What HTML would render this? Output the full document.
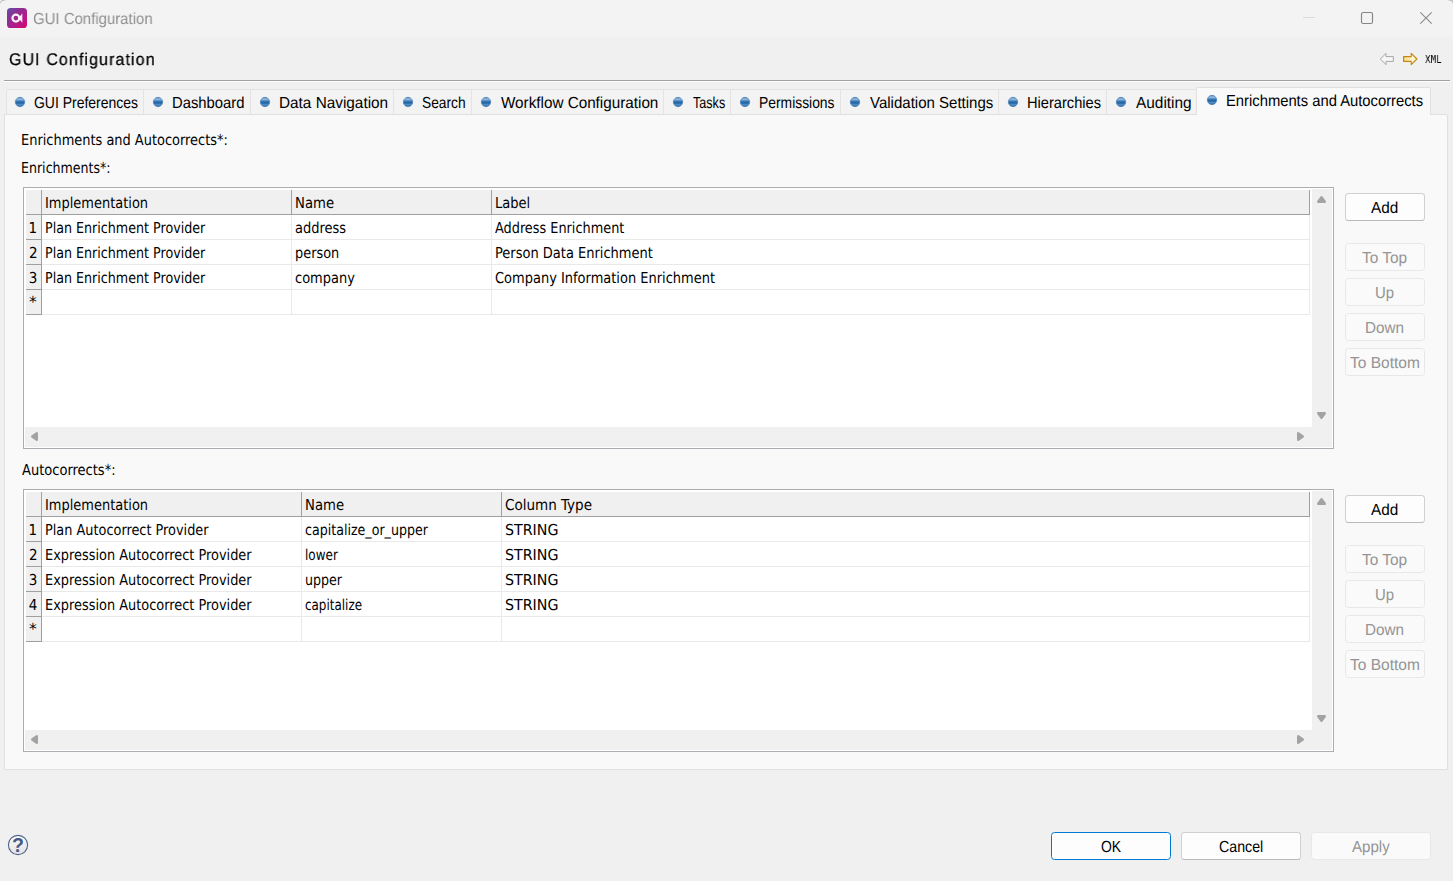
<!DOCTYPE html>
<html lang="en">
<head>
<meta charset="utf-8">
<title>GUI Configuration</title>
<style>
html,body{margin:0;padding:0;}
body{width:1453px;height:881px;overflow:hidden;background:#f0f0f0;position:relative;font-family:"Liberation Sans",sans-serif;color:#000;}
header,nav,main,section,footer{display:block;margin:0;padding:0;}
h1,h2{margin:0;font-weight:normal;}
div,svg,button,.t{position:absolute;box-sizing:border-box;margin:0;padding:0;}
.t{white-space:nowrap;display:block;text-rendering:geometricPrecision;transform-origin:0 0;}
.sg{font-family:"Liberation Sans",sans-serif;font-size:16px;line-height:19px;}
.tf{font-family:"DejaVu Sans Condensed","Liberation Sans",sans-serif;font-size:15px;line-height:18px;}
.mono{font-family:"Liberation Mono",monospace;font-size:12px;line-height:14px;}
.hd{font-size:17px;line-height:20px;-webkit-text-stroke:0.27px #000;}
.gs{will-change:transform;}
.titlebar{left:0;top:0;width:1453px;height:37px;background:#f3f3f3;}
.rule{left:4px;top:80px;width:1446px;height:2px;background:#fff;border-top:1px solid #a0a0a0;}
.tab{top:89px;height:25px;background:#f3f3f3;border:1px solid #e3e3e3;border-bottom:none;}
.tab.first{border-top-left-radius:2px;}
.tab.active{top:87px;height:28px;background:#f9f9f9;border-color:#e0e0e0;border-radius:2px 2px 0 0;}
.panel{left:4px;top:114px;width:1444px;height:656px;background:#f9f9f9;border:1px solid #e0e0e0;border-top-right-radius:2px;}
.grid{left:23px;width:1311px;background:#fff;border:1px solid #abadb3;}
.sb{background:#f0f0f0;}
.c{height:25px;border-right:1px solid #e9e9e9;border-bottom:1px solid #e9e9e9;background:#fff;}
.c.h,.c.n{background:#f0f0f0;border-color:#a0a0a0;}
button{font:inherit;color:inherit;border:1px solid #d0d0d0;border-bottom-color:#bababa;border-radius:3.5px;background:#fdfdfd;width:80px;height:28px;overflow:visible;}
button:disabled{border-color:#e8e8e8;background:#fafafa;color:#949494;}
button.def{border-color:#0078d4;}
button.wide{width:120px;}
</style>
</head>
<body>

<header>
<div class="titlebar">
<svg style="left:7px;top:8px" width="20" height="20" viewBox="0 0 20 20">
<defs><linearGradient id="ig" x1="0" y1="0" x2="1" y2="1"><stop offset="0" stop-color="#6350a8"/><stop offset="0.3" stop-color="#873296"/><stop offset="0.65" stop-color="#b31a88"/><stop offset="1" stop-color="#d8046c"/></linearGradient></defs>
<rect x="0" y="0" width="20" height="20" rx="3.6" fill="url(#ig)"/>
<circle cx="8.9" cy="10.1" r="3.45" fill="none" stroke="#fdf2f9" stroke-width="2.2"/>
<path d="M11.4 10.1L15.3 5.4V14.8Z" fill="#fdf2f9"/>
</svg>
<svg style="left:0;top:0" width="8" height="5" viewBox="0 0 8 5" shape-rendering="crispEdges">
<rect x="0" y="3" width="1" height="1" fill="#e4e4e4"/><rect x="0" y="2" width="1" height="1" fill="#cfcfcf"/><rect x="1" y="1" width="1" height="1" fill="#b4b4b4"/><rect x="0" y="1" width="1" height="1" fill="#dedede"/><rect x="1" y="0" width="1" height="1" fill="#dcdcdc"/>
<rect x="2" y="0" width="1" height="1" fill="#bcbcbc"/><rect x="3" y="0" width="1" height="1" fill="#c6c6c6"/><rect x="4" y="0" width="1" height="1" fill="#d2d2d2"/><rect x="5" y="0" width="1" height="1" fill="#e2e2e2"/>
</svg>
<svg style="left:1445px;top:0" width="8" height="5" viewBox="0 0 8 5" shape-rendering="crispEdges">
<rect x="7" y="3" width="1" height="1" fill="#e8e8e8"/><rect x="7" y="2" width="1" height="1" fill="#d6d6d6"/><rect x="7" y="1" width="1" height="1" fill="#b0b0b0"/><rect x="6" y="1" width="1" height="1" fill="#e0e0e0"/><rect x="7" y="0" width="1" height="1" fill="#d8d8d8"/>
<rect x="6" y="0" width="1" height="1" fill="#bcbcbc"/><rect x="5" y="0" width="1" height="1" fill="#c4c4c4"/><rect x="4" y="0" width="1" height="1" fill="#d0d0d0"/><rect x="3" y="0" width="1" height="1" fill="#e2e2e2"/>
</svg>
<span class="t sg gs" style="left:33.35px;top:10px;transform:scaleX(0.9339);color:#8f8f8f;">GUI Configuration</span>
<svg style="left:1293px;top:0" width="160" height="37" viewBox="0 0 160 37" fill="none">
<path d="M10 17.5H22" stroke="#dadada" stroke-width="1"/>
<rect x="68.5" y="12.5" width="11" height="11" rx="1.8" stroke="#858585" stroke-width="1.15"/>
<path d="M127.3 12.3L138.7 23.7M138.7 12.3L127.3 23.7" stroke="#8a8a8a" stroke-width="1.1"/>
</svg>
</div>
<h1 class="t sg hd gs" style="left:9.30px;top:50px;letter-spacing:1.178px;transform:scaleX(0.9400);">GUI Configuration</h1>
<svg style="left:1378px;top:50px" width="42" height="18" viewBox="0 0 42 18">
<defs><linearGradient id="ag" x1="0" y1="0" x2="1" y2="0"><stop offset="0" stop-color="#f9dc7c"/><stop offset="0.7" stop-color="#fff6d6"/><stop offset="1" stop-color="#fbe9a8"/></linearGradient></defs>
<path d="M2.3 9.0L8.0 3.4V6.6H15.3V11.4H8.0V14.6Z" fill="#f6f6f6" stroke="#a6a6a6" stroke-width="1" stroke-linejoin="round"/>
<path d="M38.9 9.0L33.2 3.4V6.6H25.6V11.4H33.2V14.6Z" fill="url(#ag)" stroke="#bf8618" stroke-width="1.1" stroke-linejoin="round"/>
</svg>
<span class="t mono gs" style="left:1424.61px;top:53px;transform:scaleX(0.7726);">XML</span>
<div class="rule"></div>
</header>
<svg width="0" height="0" style="left:0;top:0"><defs>
<linearGradient id="dg" x1="0" y1="0" x2="0" y2="1"><stop offset="0" stop-color="#4f8ac2"/><stop offset="0.2" stop-color="#9cbde0"/><stop offset="0.42" stop-color="#3b79b6"/><stop offset="0.6" stop-color="#1c62a4"/><stop offset="0.8" stop-color="#5c90c5"/><stop offset="1" stop-color="#1f629f"/></linearGradient>
</defs></svg>
<nav>
<div class="panel"></div>
<div class="tab first" style="left:6px;width:138px;"><svg style="left:7px;top:6px" width="12" height="12" viewBox="0 0 12 12"><circle cx="6" cy="6" r="4.7" fill="url(#dg)" stroke="#2e6dab" stroke-opacity="0.75" stroke-width="0.7"/></svg><span class="t sg" style="left:27.20px;top:4px;transform:scaleX(0.8730);">GUI Preferences</span></div>
<div class="tab" style="left:143px;width:108px;"><svg style="left:8px;top:6px" width="12" height="12" viewBox="0 0 12 12"><circle cx="6" cy="6" r="4.7" fill="url(#dg)" stroke="#2e6dab" stroke-opacity="0.75" stroke-width="0.7"/></svg><span class="t sg" style="left:28.32px;top:4px;transform:scaleX(0.9247);">Dashboard</span></div>
<div class="tab" style="left:250px;width:144px;"><svg style="left:8px;top:6px" width="12" height="12" viewBox="0 0 12 12"><circle cx="6" cy="6" r="4.7" fill="url(#dg)" stroke="#2e6dab" stroke-opacity="0.75" stroke-width="0.7"/></svg><span class="t sg" style="left:27.87px;top:4px;transform:scaleX(0.9586);">Data Navigation</span></div>
<div class="tab" style="left:393px;width:79px;"><svg style="left:8px;top:6px" width="12" height="12" viewBox="0 0 12 12"><circle cx="6" cy="6" r="4.7" fill="url(#dg)" stroke="#2e6dab" stroke-opacity="0.75" stroke-width="0.7"/></svg><span class="t sg" style="left:28.38px;top:4px;transform:scaleX(0.8599);">Search</span></div>
<div class="tab" style="left:471px;width:193px;"><svg style="left:8px;top:6px" width="12" height="12" viewBox="0 0 12 12"><circle cx="6" cy="6" r="4.7" fill="url(#dg)" stroke="#2e6dab" stroke-opacity="0.75" stroke-width="0.7"/></svg><span class="t sg" style="left:28.82px;top:4px;transform:scaleX(0.9530);">Workflow Configuration</span></div>
<div class="tab" style="left:663px;width:68px;"><svg style="left:8px;top:6px" width="12" height="12" viewBox="0 0 12 12"><circle cx="6" cy="6" r="4.7" fill="url(#dg)" stroke="#2e6dab" stroke-opacity="0.75" stroke-width="0.7"/></svg><span class="t sg" style="left:28.59px;top:4px;transform:scaleX(0.7866);">Tasks</span></div>
<div class="tab" style="left:730px;width:111px;"><svg style="left:8px;top:6px" width="12" height="12" viewBox="0 0 12 12"><circle cx="6" cy="6" r="4.7" fill="url(#dg)" stroke="#2e6dab" stroke-opacity="0.75" stroke-width="0.7"/></svg><span class="t sg" style="left:27.99px;top:4px;transform:scaleX(0.8666);">Permissions</span></div>
<div class="tab" style="left:840px;width:159px;"><svg style="left:8px;top:6px" width="12" height="12" viewBox="0 0 12 12"><circle cx="6" cy="6" r="4.7" fill="url(#dg)" stroke="#2e6dab" stroke-opacity="0.75" stroke-width="0.7"/></svg><span class="t sg" style="left:28.72px;top:4px;transform:scaleX(0.9385);">Validation Settings</span></div>
<div class="tab" style="left:998px;width:109px;"><svg style="left:8px;top:6px" width="12" height="12" viewBox="0 0 12 12"><circle cx="6" cy="6" r="4.7" fill="url(#dg)" stroke="#2e6dab" stroke-opacity="0.75" stroke-width="0.7"/></svg><span class="t sg" style="left:28.03px;top:4px;transform:scaleX(0.9147);">Hierarchies</span></div>
<div class="tab" style="left:1106px;width:91px;"><svg style="left:8px;top:6px" width="12" height="12" viewBox="0 0 12 12"><circle cx="6" cy="6" r="4.7" fill="url(#dg)" stroke="#2e6dab" stroke-opacity="0.75" stroke-width="0.7"/></svg><span class="t sg" style="left:28.92px;top:4px;transform:scaleX(0.9626);">Auditing</span></div>
<div class="tab active" style="left:1196px;width:235px;"><svg style="left:9px;top:6px" width="12" height="12" viewBox="0 0 12 12"><circle cx="6" cy="6" r="4.7" fill="url(#dg)" stroke="#2e6dab" stroke-opacity="0.75" stroke-width="0.7"/></svg><span class="t sg" style="left:28.92px;top:4px;transform:scaleX(0.9234);">Enrichments and Autocorrects</span></div>
</nav>
<main>
<h2 class="t tf" style="left:21.20px;top:131px;transform:scaleX(0.9598);">Enrichments and Autocorrects*:</h2>
<section>
<span class="t tf" style="left:21.24px;top:159px;transform:scaleX(0.9337);">Enrichments*:</span>
<div class="grid" role="table" style="top:187px;height:262px;">
<div class="sb" style="left:1288px;top:1px;width:20px;height:258px;"><svg style="left:4px;top:6px" width="11" height="9" viewBox="0 0 11 9"><path d="M5.5 2.2L8.8 6.8H2.2Z" fill="#a3a3a3" stroke="#a3a3a3" stroke-width="2.4" stroke-linejoin="round"/></svg><svg style="left:4px;top:222px" width="11" height="9" viewBox="0 0 11 9"><path d="M5.5 6.8L8.8 2.2H2.2Z" fill="#a3a3a3" stroke="#a3a3a3" stroke-width="2.4" stroke-linejoin="round"/></svg></div>
<div class="sb" style="left:1px;top:239px;width:1287px;height:20px;"><svg style="left:5px;top:4px" width="9" height="11" viewBox="0 0 9 11"><path d="M2.2 5.5L6.8 2.2V8.8Z" fill="#a3a3a3" stroke="#a3a3a3" stroke-width="2.4" stroke-linejoin="round"/></svg><svg style="left:1271px;top:4px" width="9" height="11" viewBox="0 0 9 11"><path d="M6.8 5.5L2.2 2.2V8.8Z" fill="#a3a3a3" stroke="#a3a3a3" stroke-width="2.4" stroke-linejoin="round"/></svg></div>
<div class="sb" style="left:1287px;top:238px;width:1px;height:1px;background:#f4f4f4;"></div>
<div role="row" style="left:2px;top:2px;width:1284px;height:25px;"><div class="c h" role="columnheader" style="left:0px;top:0;width:16px;"></div><div class="c h" role="columnheader" style="left:16px;top:0;width:250px;"><span class="t tf" style="left:2.60px;top:4px;transform:scaleX(0.9618);">Implementation</span></div><div class="c h" role="columnheader" style="left:266px;top:0;width:200px;"><span class="t tf" style="left:2.58px;top:4px;transform:scaleX(0.9808);">Name</span></div><div class="c h" role="columnheader" style="left:466px;top:0;width:818px;"><span class="t tf" style="left:2.59px;top:4px;transform:scaleX(0.9667);">Label</span></div></div>
<div role="row" style="left:2px;top:27px;width:1284px;height:25px;"><div class="c n" role="rowheader" style="left:0px;top:0;width:16px;"><span class="t tf" style="left:2.57px;top:4px;">1</span></div><div class="c" role="cell" style="left:16px;top:0;width:250px;"><span class="t tf" style="left:2.63px;top:4px;transform:scaleX(0.9406);">Plan Enrichment Provider</span></div><div class="c" role="cell" style="left:266px;top:0;width:200px;"><span class="t tf" style="left:3.10px;top:4px;transform:scaleX(0.9646);">address</span></div><div class="c" role="cell" style="left:466px;top:0;width:818px;"><span class="t tf" style="left:2.86px;top:4px;transform:scaleX(0.9538);">Address Enrichment</span></div></div>
<div role="row" style="left:2px;top:52px;width:1284px;height:25px;"><div class="c n" role="rowheader" style="left:0px;top:0;width:16px;"><span class="t tf" style="left:2.91px;top:4px;">2</span></div><div class="c" role="cell" style="left:16px;top:0;width:250px;"><span class="t tf" style="left:2.63px;top:4px;transform:scaleX(0.9406);">Plan Enrichment Provider</span></div><div class="c" role="cell" style="left:266px;top:0;width:200px;"><span class="t tf" style="left:2.75px;top:4px;transform:scaleX(0.9556);">person</span></div><div class="c" role="cell" style="left:466px;top:0;width:818px;"><span class="t tf" style="left:2.60px;top:4px;transform:scaleX(0.9644);">Person Data Enrichment</span></div></div>
<div role="row" style="left:2px;top:77px;width:1284px;height:25px;"><div class="c n" role="rowheader" style="left:0px;top:0;width:16px;"><span class="t tf" style="left:2.72px;top:4px;">3</span></div><div class="c" role="cell" style="left:16px;top:0;width:250px;"><span class="t tf" style="left:2.63px;top:4px;transform:scaleX(0.9406);">Plan Enrichment Provider</span></div><div class="c" role="cell" style="left:266px;top:0;width:200px;"><span class="t tf" style="left:3.18px;top:4px;transform:scaleX(0.9615);">company</span></div><div class="c" role="cell" style="left:466px;top:0;width:818px;"><span class="t tf" style="left:3.18px;top:4px;transform:scaleX(0.9631);">Company Information Enrichment</span></div></div>
<div role="row" style="left:2px;top:102px;width:1284px;height:25px;"><div class="c n" role="rowheader" style="left:0px;top:0;width:16px;"><span class="t tf" style="left:3.22px;top:3px;transform:scaleX(1.1500);">*</span></div><div class="c" role="cell" style="left:16px;top:0;width:250px;"></div><div class="c" role="cell" style="left:266px;top:0;width:200px;"></div><div class="c" role="cell" style="left:466px;top:0;width:818px;"></div></div>
</div>
<button type="button" style="left:1345px;top:193px;"><span class="t sg" style="left:25.22px;top:5px;transform:scaleX(0.9576);">Add</span></button>
<button type="button" disabled style="left:1345px;top:243px;"><span class="t sg" style="left:16.12px;top:5px;transform:scaleX(0.9615);">To Top</span></button>
<button type="button" disabled style="left:1345px;top:278px;"><span class="t sg" style="left:29.03px;top:5px;transform:scaleX(0.9321);">Up</span></button>
<button type="button" disabled style="left:1345px;top:313px;"><span class="t sg" style="left:19.38px;top:5px;transform:scaleX(0.9544);">Down</span></button>
<button type="button" disabled style="left:1345px;top:348px;"><span class="t sg" style="left:3.71px;top:5px;transform:scaleX(0.9694);">To Bottom</span></button>
</section>
<section>
<span class="t tf" style="left:21.56px;top:461px;transform:scaleX(0.9664);">Autocorrects*:</span>
<div class="grid" role="table" style="top:489px;height:263px;">
<div class="sb" style="left:1288px;top:1px;width:20px;height:259px;"><svg style="left:4px;top:6px" width="11" height="9" viewBox="0 0 11 9"><path d="M5.5 2.2L8.8 6.8H2.2Z" fill="#a3a3a3" stroke="#a3a3a3" stroke-width="2.4" stroke-linejoin="round"/></svg><svg style="left:4px;top:223px" width="11" height="9" viewBox="0 0 11 9"><path d="M5.5 6.8L8.8 2.2H2.2Z" fill="#a3a3a3" stroke="#a3a3a3" stroke-width="2.4" stroke-linejoin="round"/></svg></div>
<div class="sb" style="left:1px;top:240px;width:1287px;height:20px;"><svg style="left:5px;top:4px" width="9" height="11" viewBox="0 0 9 11"><path d="M2.2 5.5L6.8 2.2V8.8Z" fill="#a3a3a3" stroke="#a3a3a3" stroke-width="2.4" stroke-linejoin="round"/></svg><svg style="left:1271px;top:4px" width="9" height="11" viewBox="0 0 9 11"><path d="M6.8 5.5L2.2 2.2V8.8Z" fill="#a3a3a3" stroke="#a3a3a3" stroke-width="2.4" stroke-linejoin="round"/></svg></div>
<div class="sb" style="left:1287px;top:239px;width:1px;height:1px;background:#f4f4f4;"></div>
<div role="row" style="left:2px;top:2px;width:1284px;height:25px;"><div class="c h" role="columnheader" style="left:0px;top:0;width:16px;"></div><div class="c h" role="columnheader" style="left:16px;top:0;width:260px;"><span class="t tf" style="left:2.60px;top:4px;transform:scaleX(0.9618);">Implementation</span></div><div class="c h" role="columnheader" style="left:276px;top:0;width:200px;"><span class="t tf" style="left:2.58px;top:4px;transform:scaleX(0.9808);">Name</span></div><div class="c h" role="columnheader" style="left:476px;top:0;width:808px;"><span class="t tf" style="left:3.15px;top:4px;transform:scaleX(1.0026);">Column Type</span></div></div>
<div role="row" style="left:2px;top:27px;width:1284px;height:25px;"><div class="c n" role="rowheader" style="left:0px;top:0;width:16px;"><span class="t tf" style="left:2.57px;top:4px;">1</span></div><div class="c" role="cell" style="left:16px;top:0;width:260px;"><span class="t tf" style="left:2.61px;top:4px;transform:scaleX(0.9550);">Plan Autocorrect Provider</span></div><div class="c" role="cell" style="left:276px;top:0;width:200px;"><span class="t tf" style="left:3.20px;top:4px;transform:scaleX(0.9366);">capitalize_or_upper</span></div><div class="c" role="cell" style="left:476px;top:0;width:808px;"><span class="t tf" style="left:2.95px;top:4px;transform:scaleX(1.0539);">STRING</span></div></div>
<div role="row" style="left:2px;top:52px;width:1284px;height:25px;"><div class="c n" role="rowheader" style="left:0px;top:0;width:16px;"><span class="t tf" style="left:2.91px;top:4px;">2</span></div><div class="c" role="cell" style="left:16px;top:0;width:260px;"><span class="t tf" style="left:2.61px;top:4px;transform:scaleX(0.9574);">Expression Autocorrect Provider</span></div><div class="c" role="cell" style="left:276px;top:0;width:200px;"><span class="t tf" style="left:2.77px;top:4px;transform:scaleX(0.8898);">lower</span></div><div class="c" role="cell" style="left:476px;top:0;width:808px;"><span class="t tf" style="left:2.95px;top:4px;transform:scaleX(1.0539);">STRING</span></div></div>
<div role="row" style="left:2px;top:77px;width:1284px;height:25px;"><div class="c n" role="rowheader" style="left:0px;top:0;width:16px;"><span class="t tf" style="left:2.72px;top:4px;">3</span></div><div class="c" role="cell" style="left:16px;top:0;width:260px;"><span class="t tf" style="left:2.61px;top:4px;transform:scaleX(0.9574);">Expression Autocorrect Provider</span></div><div class="c" role="cell" style="left:276px;top:0;width:200px;"><span class="t tf" style="left:2.85px;top:4px;transform:scaleX(0.9375);">upper</span></div><div class="c" role="cell" style="left:476px;top:0;width:808px;"><span class="t tf" style="left:2.95px;top:4px;transform:scaleX(1.0539);">STRING</span></div></div>
<div role="row" style="left:2px;top:102px;width:1284px;height:25px;"><div class="c n" role="rowheader" style="left:0px;top:0;width:16px;"><span class="t tf" style="left:2.76px;top:4px;">4</span></div><div class="c" role="cell" style="left:16px;top:0;width:260px;"><span class="t tf" style="left:2.61px;top:4px;transform:scaleX(0.9574);">Expression Autocorrect Provider</span></div><div class="c" role="cell" style="left:276px;top:0;width:200px;"><span class="t tf" style="left:3.24px;top:4px;transform:scaleX(0.8841);">capitalize</span></div><div class="c" role="cell" style="left:476px;top:0;width:808px;"><span class="t tf" style="left:2.95px;top:4px;transform:scaleX(1.0539);">STRING</span></div></div>
<div role="row" style="left:2px;top:127px;width:1284px;height:25px;"><div class="c n" role="rowheader" style="left:0px;top:0;width:16px;"><span class="t tf" style="left:3.22px;top:3px;transform:scaleX(1.1500);">*</span></div><div class="c" role="cell" style="left:16px;top:0;width:260px;"></div><div class="c" role="cell" style="left:276px;top:0;width:200px;"></div><div class="c" role="cell" style="left:476px;top:0;width:808px;"></div></div>
</div>
<button type="button" style="left:1345px;top:495px;"><span class="t sg" style="left:25.22px;top:5px;transform:scaleX(0.9576);">Add</span></button>
<button type="button" disabled style="left:1345px;top:545px;"><span class="t sg" style="left:16.12px;top:5px;transform:scaleX(0.9615);">To Top</span></button>
<button type="button" disabled style="left:1345px;top:580px;"><span class="t sg" style="left:29.03px;top:5px;transform:scaleX(0.9321);">Up</span></button>
<button type="button" disabled style="left:1345px;top:615px;"><span class="t sg" style="left:19.38px;top:5px;transform:scaleX(0.9544);">Down</span></button>
<button type="button" disabled style="left:1345px;top:650px;"><span class="t sg" style="left:3.71px;top:5px;transform:scaleX(0.9694);">To Bottom</span></button>
</section>
</main>
<footer>
<svg style="left:6px;top:833px" width="24" height="24" viewBox="0 0 24 24">
<defs><linearGradient id="hg" x1="0" y1="0" x2="0" y2="1"><stop offset="0" stop-color="#fbfbfb"/><stop offset="1" stop-color="#e2e2e2"/></linearGradient></defs>
<circle cx="12" cy="12" r="9.6" fill="url(#hg)" stroke="#51648b" stroke-width="1.1"/>
<text x="11.9" y="19.2" text-anchor="middle" font-family="Liberation Sans, sans-serif" font-weight="bold" font-size="19.5" fill="#435a84">?</text>
</svg>
<button type="button" class="def wide" style="left:1051px;top:832px;"><span class="t sg" style="left:48.72px;top:5px;transform:scaleX(0.8709);">OK</span></button>
<button type="button" class="wide" style="left:1181px;top:832px;"><span class="t sg" style="left:37.04px;top:5px;transform:scaleX(0.8869);">Cancel</span></button>
<button type="button" class="wide" disabled style="left:1311px;top:832px;"><span class="t sg" style="left:40.17px;top:5px;transform:scaleX(0.9413);">Apply</span></button>
</footer>
</body>
</html>
